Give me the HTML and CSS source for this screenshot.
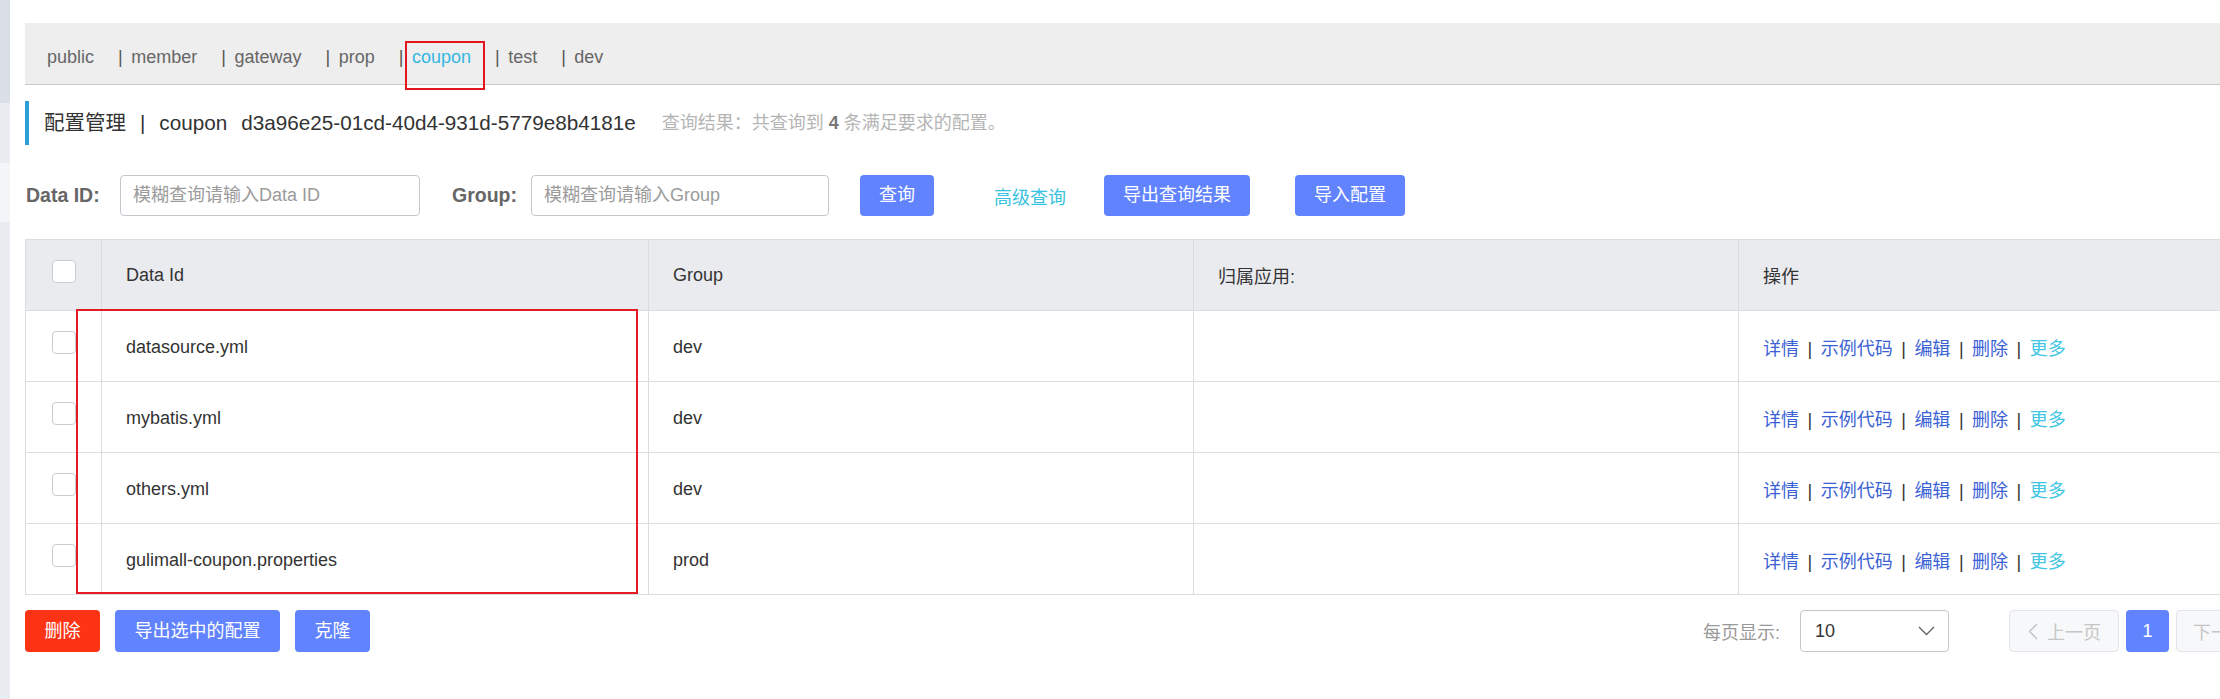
FILE: index.html
```html
<!DOCTYPE html>
<html lang="zh-CN">
<head>
<meta charset="utf-8">
<title>配置管理</title>
<link rel="stylesheet" href="styles.css">
</head>
<body>
<div class="page">
  <aside class="side">
    <div class="side-a"></div>
    <div class="side-b"></div>
    <div class="side-c"></div>
    <div class="side-d"></div>
  </aside>
  <main class="main">
    <nav class="ns">
      <span class="ns-item">public</span>
      <span class="ns-item"><span class="sep">|</span>member</span>
      <span class="ns-item"><span class="sep">|</span>gateway</span>
      <span class="ns-item"><span class="sep">|</span>prop</span>
      <span class="ns-item active"><span class="sep">|</span><span class="lab">coupon</span></span>
      <span class="ns-item"><span class="sep">|</span>test</span>
      <span class="ns-item"><span class="sep">|</span>dev</span>
    </nav>

    <div class="title">
      <span>配置管理</span><span class="title-sep">|</span><span class="latin">coupon</span><span class="uuid latin">d3a96e25-01cd-40d4-931d-5779e8b4181e</span>
      <span class="result">查询结果：共查询到 <b>4</b> 条满足要求的配置。</span>
    </div>

    <div class="search">
      <span class="lbl lbl-id">Data ID:</span>
      <input class="inp" type="text" placeholder="模糊查询请输入Data ID">
      <span class="lbl lbl-group">Group:</span>
      <input class="inp inp-group" type="text" placeholder="模糊查询请输入Group">
      <button class="btn btn-query">查询</button>
      <a class="adv">高级查询</a>
      <button class="btn btn-export">导出查询结果</button>
      <button class="btn btn-import">导入配置</button>
    </div>

    <div class="tablewrap">
      <table class="tbl">
        <colgroup>
          <col class="c-chk">
          <col class="c-id">
          <col class="c-group">
          <col class="c-app">
          <col class="c-op">
        </colgroup>
        <thead>
          <tr>
            <th class="chk"><span class="box"></span></th>
            <th>Data Id</th>
            <th>Group</th>
            <th>归属应用:</th>
            <th>操作</th>
          </tr>
        </thead>
        <tbody>
          <tr>
            <td class="chk"><span class="box"></span></td>
            <td>datasource.yml</td>
            <td>dev</td>
            <td></td>
            <td class="ops"><a>详情</a><span class="sep">|</span><a>示例代码</a><span class="sep">|</span><a>编辑</a><span class="sep">|</span><a>删除</a><span class="sep">|</span><a class="more">更多</a></td>
          </tr>
          <tr>
            <td class="chk"><span class="box"></span></td>
            <td>mybatis.yml</td>
            <td>dev</td>
            <td></td>
            <td class="ops"><a>详情</a><span class="sep">|</span><a>示例代码</a><span class="sep">|</span><a>编辑</a><span class="sep">|</span><a>删除</a><span class="sep">|</span><a class="more">更多</a></td>
          </tr>
          <tr>
            <td class="chk"><span class="box"></span></td>
            <td>others.yml</td>
            <td>dev</td>
            <td></td>
            <td class="ops"><a>详情</a><span class="sep">|</span><a>示例代码</a><span class="sep">|</span><a>编辑</a><span class="sep">|</span><a>删除</a><span class="sep">|</span><a class="more">更多</a></td>
          </tr>
          <tr>
            <td class="chk"><span class="box"></span></td>
            <td>gulimall-coupon.properties</td>
            <td>prod</td>
            <td></td>
            <td class="ops"><a>详情</a><span class="sep">|</span><a>示例代码</a><span class="sep">|</span><a>编辑</a><span class="sep">|</span><a>删除</a><span class="sep">|</span><a class="more">更多</a></td>
          </tr>
        </tbody>
      </table>
      <div class="mark"></div>
    </div>

    <div class="footer">
      <button class="fbtn danger">删除</button>
      <button class="fbtn">导出选中的配置</button>
      <button class="fbtn">克隆</button>
      <div class="pager">
        <span class="per">每页显示:</span>
        <div class="select"><span>10</span>
          <svg class="chev" width="17" height="10" viewBox="0 0 17 10"><polyline points="1,1 8.5,8.5 16,1" fill="none" stroke="#666" stroke-width="1.4"/></svg>
        </div>
        <div class="pg prev">
          <svg width="10" height="17" viewBox="0 0 10 17"><polyline points="9,1 1.5,8.5 9,16" fill="none" stroke="#c9c9c9" stroke-width="1.6"/></svg>
          <span>上一页</span>
        </div>
        <div class="pg cur">1</div>
        <div class="pg next">
          <span>下一页</span>
          <svg width="10" height="17" viewBox="0 0 10 17"><polyline points="1,1 8.5,8.5 1,16" fill="none" stroke="#c9c9c9" stroke-width="1.6"/></svg>
        </div>
      </div>
    </div>
  </main>
</div>
</body>
</html>
```

FILE: styles.css
```css
* { box-sizing: border-box; }
html, body { margin: 0; padding: 0; background: #fff; }
body {
  font-family: "Liberation Sans", "Noto Sans CJK SC", sans-serif;
  color: #333;
  width: 2220px;
  height: 699px;
  overflow: hidden;
}
.page { display: flex; height: 699px; }

.side { width: 10px; flex: none; display: flex; flex-direction: column; }
.side-a { height: 103px; background: #dadee5; }
.side-b { height: 60px; background: #e9ecf0; }
.side-c { height: 59px; background: #f4f5f8; }
.side-d { flex: 1; background: #e9ecf0; }

.main { flex: none; width: 2261px; margin-left: 15px; padding-top: 23px; }

/* namespace tabs */
.ns {
  height: 62px;
  background: #eeeeee;
  border-bottom: 1px solid #c8c8c8;
  padding: 19px 0 0 22px;
  display: flex;
  font-size: 18px;
  line-height: 30px;
  color: #666;
  white-space: nowrap;
}
.ns-item + .ns-item { margin-left: 24px; }
.ns .sep { margin-right: 8.5px; color: #555; }
.ns .lab { position: relative; color: #34b6e2; }
.ns .lab::after {
  content: "";
  position: absolute;
  left: -7px;
  top: -6px;
  width: 76px;
  height: 45px;
  border: 2px solid #e4151f;
}

/* title */
.title {
  margin-top: 16px;
  height: 44px;
  border-left: 4px solid #2b9fd6;
  padding-left: 15px;
  display: flex;
  align-items: center;
  font-size: 20.5px;
  line-height: 28px;
  color: #333;
  white-space: nowrap;
}
.title .latin { font-size: 20.7px; }
.title-sep { margin: 0 14px; }
.uuid { margin-left: 14px; }
.result { margin-left: 26px; font-size: 18px; color: #b5b5b5; }
.result b { color: #777; }

/* search */
.search { margin-top: 30px; height: 41px; display: flex; align-items: center; white-space: nowrap; }
.lbl { font-size: 19.5px; font-weight: bold; color: #666; padding-left: 1px; }
.lbl-id { width: 95px; }
.lbl-group { width: 80px; margin-left: 31px; }
.inp {
  width: 300px;
  height: 41px;
  border: 1px solid #c5c7cf;
  border-radius: 4px;
  padding: 0 12px;
  font: 18px "Liberation Sans", "Noto Sans CJK SC", sans-serif;
  color: #333;
  outline: none;
  background: #fff;
}
.inp::placeholder { color: #9b9b9b; }
.inp-group { width: 298px; }
.btn {
  height: 41px;
  padding: 0 19px;
  border: none;
  border-radius: 4px;
  background: #6184fe;
  color: #fff;
  font: 18px/41px "Liberation Sans", "Noto Sans CJK SC", sans-serif;
}
.btn-query { margin-left: 31px; }
.adv { margin-left: 60px; font-size: 18px; color: #36c2e0; }
.btn-export { margin-left: 38px; }
.btn-import { margin-left: 45px; }

/* table */
.tablewrap { position: relative; margin-top: 23px; }
.tbl {
  width: 2261px;
  table-layout: fixed;
  border-collapse: separate;
  border-spacing: 0;
  border-top: 1px solid #dcdde2;
  border-left: 1px solid #dcdde2;
}
.c-chk { width: 76px; }
.c-id { width: 547px; }
.c-group { width: 545px; }
.c-app { width: 545px; }
.c-op { width: 547px; }
.tbl th, .tbl td {
  height: 71px;
  border-right: 1px solid #dcdde2;
  border-bottom: 1px solid #dcdde2;
  padding: 0 0 0 24px;
  text-align: left;
  font-weight: normal;
  font-size: 18px;
  color: #333;
  vertical-align: middle;
  white-space: nowrap;
}
.tbl th { background: #eaebef; }
.tbl td { padding-top: 2px; }
.tbl .chk { padding: 0; }
.box {
  display: block;
  width: 24px;
  height: 23px;
  margin: 0 auto 7px;
  border: 1px solid #c9ccd3;
  border-radius: 4px;
  background: #fff;
}
.tbl .ops { font-size: 18px; }
.ops a { color: #3b62d4; }
.ops .sep { margin: 0 8.5px; color: #333; }
.ops a.more { color: #42c6e3; }
.mark {
  position: absolute;
  top: 70px;
  left: 51px;
  width: 562px;
  height: 285px;
  border: 2px solid #e41b23;
}

/* footer */
.footer { margin-top: 15px; height: 42px; display: flex; align-items: center; white-space: nowrap; }
.fbtn {
  height: 42px;
  padding: 0 19.5px;
  border: none;
  border-radius: 4px;
  background: #6184fe;
  color: #fff;
  font: 18px/42px "Liberation Sans", "Noto Sans CJK SC", sans-serif;
}
.fbtn + .fbtn { margin-left: 15px; }
.fbtn.danger { background: #fc3314; }
.pager { margin-left: auto; display: flex; align-items: center; }
.per { font-size: 18px; color: #999; margin-right: 18px; width: 79px; }
.select {
  width: 149px;
  height: 42px;
  border: 1px solid #c5c7cf;
  border-radius: 4px;
  padding: 0 13px 0 14px;
  display: flex;
  align-items: center;
  justify-content: space-between;
  font-size: 18px;
  color: #333;
}
.pg {
  height: 42px;
  border-radius: 4px;
  display: flex;
  align-items: center;
  font-size: 18px;
}
.prev, .next {
  width: 110px;
  background: #f7f8fa;
  border: 1px solid #e3e5ea;
  color: #c6c6c6;
}
.prev { margin-left: 60px; padding-left: 18px; }
.prev svg { margin-right: 9px; }
.next { margin-left: 7px; padding-left: 16px; }
.next svg { margin-left: 9px; }
.cur {
  margin-left: 7px;
  width: 43px;
  justify-content: center;
  background: #6184fe;
  color: #fff;
}
```
